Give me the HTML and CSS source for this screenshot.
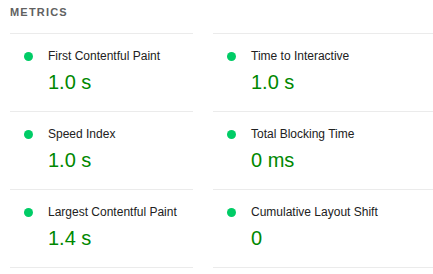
FILE: index.html
```html
<html>
<head>
    <title>Metrics</title>
    <link rel="stylesheet" href="styles.css">
</head>
<body>
    <div class="metrics">
        <div class="metrics-title">Metrics</div>

        <div class="metric-grid">
            <div class="metric">
                <div class="metric-label"><span class="dot"></span>First Contentful Paint</div>
                <div class="metric-value">1.0&nbsp;s</div>
            </div>
            <div class="metric">
                <div class="metric-label"><span class="dot"></span>Time to Interactive</div>
                <div class="metric-value">1.0&nbsp;s</div>
            </div>
            <div class="metric">
                <div class="metric-label"><span class="dot"></span>Speed Index</div>
                <div class="metric-value">1.0&nbsp;s</div>
            </div>
            <div class="metric">
                <div class="metric-label"><span class="dot"></span>Total Blocking Time</div>
                <div class="metric-value">0&nbsp;ms</div>
            </div>
            <div class="metric">
                <div class="metric-label"><span class="dot"></span>Largest Contentful Paint</div>
                <div class="metric-value">1.4&nbsp;s</div>
            </div>
            <div class="metric">
                <div class="metric-label"><span class="dot"></span>Cumulative Layout Shift</div>
                <div class="metric-value">0</div>
            </div>
        </div>
    </div>
</body>
</html>
```

FILE: styles.css
```css
body {
    margin: 0;
    background: #fff;
    font-family: "Liberation Sans", Arial, sans-serif;
    color: #212121;
}
.metrics {
    padding: 4px 0 0 10px;
}
.metrics-title {
    font-size: 11px;
    line-height: 16px;
    font-weight: bold;
    letter-spacing: 1.2px;
    text-transform: uppercase;
    color: #616161;
    margin-bottom: 13px;
}
.metric-grid {
    display: grid;
    grid-template-columns: 183px 1fr;
    column-gap: 20px;
}
.metric {
    border-bottom: 1px solid #ebebeb;
    padding: 14px 0 17px 38px;
}
.metric:nth-child(-n+2) {
    border-top: 1px solid #ebebeb;
}
.metric-label {
    position: relative;
    font-size: 12px;
    line-height: 16px;
}
.dot {
    position: absolute;
    left: -24px;
    top: 4px;
    width: 9px;
    height: 9px;
    border-radius: 50%;
    background: #0c6;
}
.metric-value {
    margin-top: 6px;
    font-size: 20px;
    line-height: 24px;
    color: #080;
}
```
